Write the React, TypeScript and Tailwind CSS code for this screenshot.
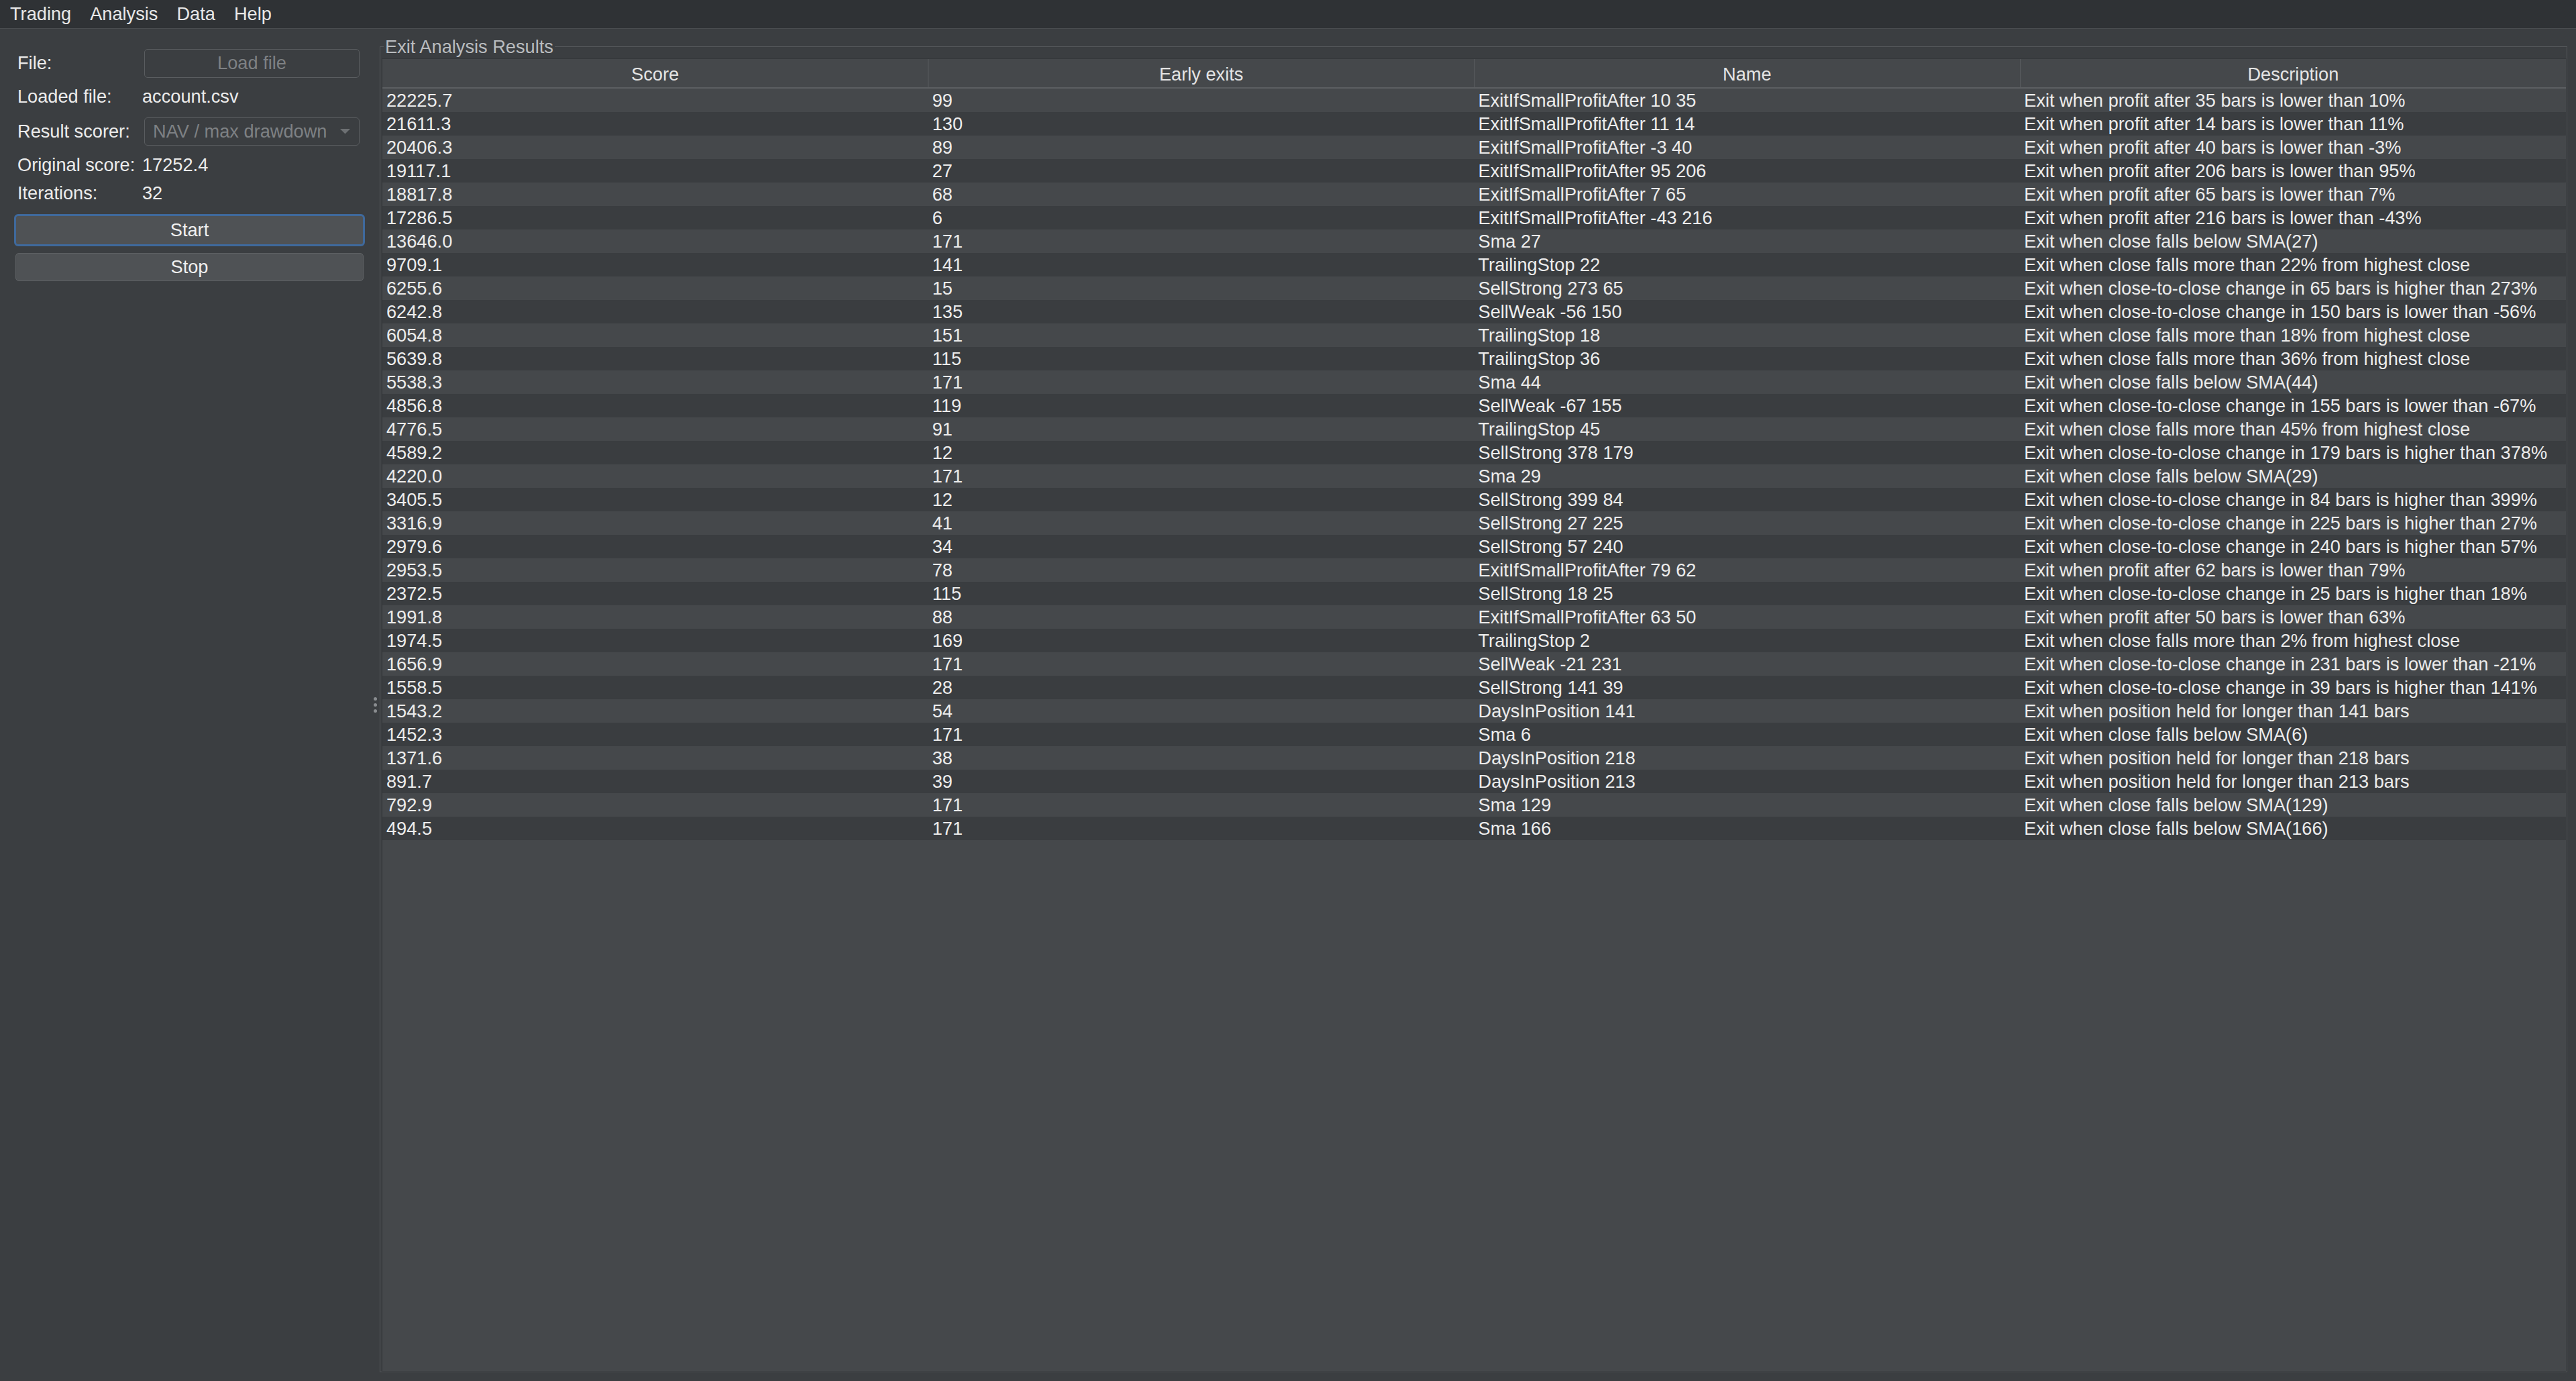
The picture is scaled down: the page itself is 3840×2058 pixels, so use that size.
import React from "react";

type Row = [string, string, string, string];

const rows: Row[] = [
  ["22225.7", "99", "ExitIfSmallProfitAfter 10 35", "Exit when profit after 35 bars is lower than 10%"],
  ["21611.3", "130", "ExitIfSmallProfitAfter 11 14", "Exit when profit after 14 bars is lower than 11%"],
  ["20406.3", "89", "ExitIfSmallProfitAfter -3 40", "Exit when profit after 40 bars is lower than -3%"],
  ["19117.1", "27", "ExitIfSmallProfitAfter 95 206", "Exit when profit after 206 bars is lower than 95%"],
  ["18817.8", "68", "ExitIfSmallProfitAfter 7 65", "Exit when profit after 65 bars is lower than 7%"],
  ["17286.5", "6", "ExitIfSmallProfitAfter -43 216", "Exit when profit after 216 bars is lower than -43%"],
  ["13646.0", "171", "Sma 27", "Exit when close falls below SMA(27)"],
  ["9709.1", "141", "TrailingStop 22", "Exit when close falls more than 22% from highest close"],
  ["6255.6", "15", "SellStrong 273 65", "Exit when close-to-close change in 65 bars is higher than 273%"],
  ["6242.8", "135", "SellWeak -56 150", "Exit when close-to-close change in 150 bars is lower than -56%"],
  ["6054.8", "151", "TrailingStop 18", "Exit when close falls more than 18% from highest close"],
  ["5639.8", "115", "TrailingStop 36", "Exit when close falls more than 36% from highest close"],
  ["5538.3", "171", "Sma 44", "Exit when close falls below SMA(44)"],
  ["4856.8", "119", "SellWeak -67 155", "Exit when close-to-close change in 155 bars is lower than -67%"],
  ["4776.5", "91", "TrailingStop 45", "Exit when close falls more than 45% from highest close"],
  ["4589.2", "12", "SellStrong 378 179", "Exit when close-to-close change in 179 bars is higher than 378%"],
  ["4220.0", "171", "Sma 29", "Exit when close falls below SMA(29)"],
  ["3405.5", "12", "SellStrong 399 84", "Exit when close-to-close change in 84 bars is higher than 399%"],
  ["3316.9", "41", "SellStrong 27 225", "Exit when close-to-close change in 225 bars is higher than 27%"],
  ["2979.6", "34", "SellStrong 57 240", "Exit when close-to-close change in 240 bars is higher than 57%"],
  ["2953.5", "78", "ExitIfSmallProfitAfter 79 62", "Exit when profit after 62 bars is lower than 79%"],
  ["2372.5", "115", "SellStrong 18 25", "Exit when close-to-close change in 25 bars is higher than 18%"],
  ["1991.8", "88", "ExitIfSmallProfitAfter 63 50", "Exit when profit after 50 bars is lower than 63%"],
  ["1974.5", "169", "TrailingStop 2", "Exit when close falls more than 2% from highest close"],
  ["1656.9", "171", "SellWeak -21 231", "Exit when close-to-close change in 231 bars is lower than -21%"],
  ["1558.5", "28", "SellStrong 141 39", "Exit when close-to-close change in 39 bars is higher than 141%"],
  ["1543.2", "54", "DaysInPosition 141", "Exit when position held for longer than 141 bars"],
  ["1452.3", "171", "Sma 6", "Exit when close falls below SMA(6)"],
  ["1371.6", "38", "DaysInPosition 218", "Exit when position held for longer than 218 bars"],
  ["891.7", "39", "DaysInPosition 213", "Exit when position held for longer than 213 bars"],
  ["792.9", "171", "Sma 129", "Exit when close falls below SMA(129)"],
  ["494.5", "171", "Sma 166", "Exit when close falls below SMA(166)"],
];

const headers = ["Score", "Early exits", "Name", "Description"];

export default function App() {
  return (
    <div className="w-[3840px] h-[2058px] flex flex-col bg-[#3b3e41] text-[#ececec] text-[27.2px] font-['Liberation_Sans',Arial,sans-serif] overflow-hidden">
      {/* Menu bar */}
      <div className="h-[43px] shrink-0 flex items-center pl-[1px] bg-[#2f3235] border-b border-[#4a4d50]">
        {["Trading", "Analysis", "Data", "Help"].map((m) => (
          <span key={m} className="px-[14px] leading-[42px] text-[#e8e8e8]">
            {m}
          </span>
        ))}
      </div>

      <div className="flex-1 flex min-h-0">
        {/* Left panel */}
        <div className="w-[555px] shrink-0 flex flex-col">
          <div className="mt-[30px] h-[43px] flex items-center">
            <span className="w-[212px] pl-[26px]">File:</span>
            <div className="ml-[3px] w-[321px] h-[43px] rounded-[5px] border border-[#5a5d60] flex items-center justify-center text-[#7e8184]">
              Load file
            </div>
          </div>
          <div className="mt-[13px] h-[31px] flex items-center">
            <span className="w-[212px] pl-[26px]">Loaded file:</span>
            <span>account.csv</span>
          </div>
          <div className="mt-[15px] h-[42px] flex items-center">
            <span className="w-[212px] pl-[26px]">Result scorer:</span>
            <div className="ml-[3px] w-[321px] h-[42px] rounded-[5px] border border-[#5a5d60] flex items-center justify-between pl-[12px] pr-[13px] text-[#7e8184]">
              <span className="whitespace-nowrap">NAV / max drawdown</span>
              <svg width="15" height="8" viewBox="0 0 15 8">
                <path d="M0 0 L15 0 L7.5 7.5 Z" fill="#6d7073" />
              </svg>
            </div>
          </div>
          <div className="mt-[14px] h-[30px] flex items-center">
            <span className="w-[212px] pl-[26px] whitespace-nowrap">Original score:</span>
            <span>17252.4</span>
          </div>
          <div className="mt-[12px] h-[30px] flex items-center">
            <span className="w-[212px] pl-[26px]">Iterations:</span>
            <span>32</span>
          </div>
          <div className="mt-[16px] ml-[21px] w-[523px] h-[48px] rounded-[6px] border-[3px] border-[#3f699c] bg-[#4f5255] flex items-center justify-center text-[#f0f0f0]">
            Start
          </div>
          <div className="mt-[10px] ml-[23px] w-[519px] h-[42px] rounded-[5px] border border-[#5e6164] bg-[#4f5255] flex items-center justify-center text-[#f0f0f0]">
            Stop
          </div>
        </div>

        {/* Splitter handle */}
        <div className="w-[8px] shrink-0 flex flex-col items-center justify-center gap-[4px]">
          <div className="w-[5px] h-[5px] rounded-full bg-[#8a8d90]" />
          <div className="w-[5px] h-[5px] rounded-full bg-[#8a8d90]" />
          <div className="w-[5px] h-[5px] rounded-full bg-[#8a8d90]" />
        </div>

        {/* Right panel */}
        <div className="flex-1 flex flex-col pl-[3px] pr-[13px] pb-[13px] pt-[26px] min-w-0">
          <div className="relative flex-1 flex flex-col border border-[#54575a] pt-[17px] pl-[2px] min-h-0">
            <span className="absolute left-[5px] top-[-16px] px-[2px] leading-[31px] bg-[#3b3e41] text-[#b9bcbf]">
              Exit Analysis Results
            </span>
            <div className="flex-1 flex flex-col border border-[#34373a] bg-[#45484b] min-h-0">
              <table className="w-full table-fixed border-collapse">
                <thead>
                  <tr className="h-[42px] bg-[#45484b]">
                    {headers.map((h, i) => (
                      <th
                        key={h}
                        className={`font-normal text-center text-[#e4e4e4] border-b-2 border-b-[#5c5f62] p-0 pt-[3px] leading-[39px] ${
                          i < 3 ? "border-r border-r-[#5c5f62]" : ""
                        }`}
                      >
                        {h}
                      </th>
                    ))}
                  </tr>
                </thead>
                <tbody>
                  {rows.map((r, i) => (
                    <tr key={i} className={`h-[35px] ${i % 2 === 0 ? "bg-[#45484b]" : "bg-[#3a3d40]"}`}>
                      {r.map((c, j) => (
                        <td key={j} className="pl-[6px] p-0 whitespace-nowrap overflow-hidden text-[#ececec] leading-[35px]">
                          {c}
                        </td>
                      ))}
                    </tr>
                  ))}
                </tbody>
              </table>
            </div>
          </div>
        </div>
      </div>
    </div>
  );
}
